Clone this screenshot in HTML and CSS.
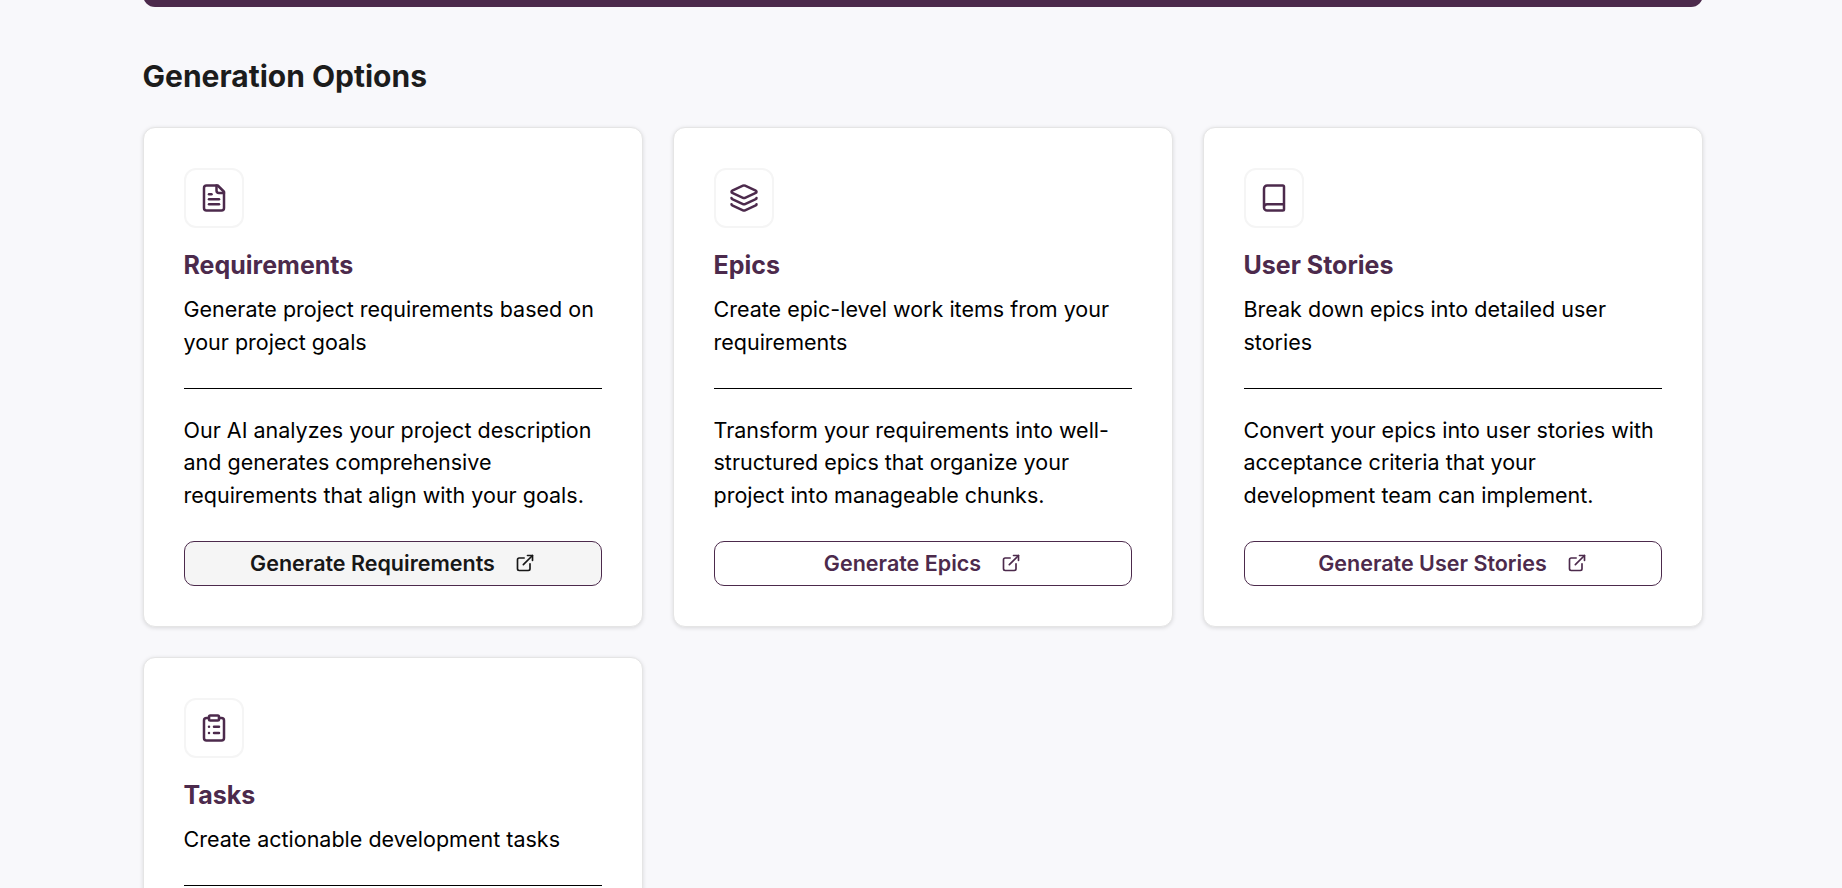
FILE: index.html
```html
<!DOCTYPE html>
<html lang="en">
<head>
<meta charset="utf-8">
<title>Generation Options</title>
<link rel="stylesheet" href="styles.css">
</head>
<body>
<svg class="sprite" aria-hidden="true">
  <symbol id="external" viewBox="0 0 24 24"><path d="M15 3h6v6"/><path d="M10 14 21 3"/><path d="M18 13v6a2 2 0 0 1-2 2H5a2 2 0 0 1-2-2V8a2 2 0 0 1 2-2h6"/></symbol>
</svg>
<main class="page">
  <div class="banner"></div>
  <h2 class="heading">Generation Options</h2>
  <div class="grid">
    <section class="card">
      <div class="icon-box"><svg class="icon" viewBox="0 0 24 24"><path d="M15 2H6a2 2 0 0 0-2 2v16a2 2 0 0 0 2 2h12a2 2 0 0 0 2-2V7Z"/><path d="M14 2v4a2 2 0 0 0 2 2h4"/><path d="M10 9H8"/><path d="M16 13H8"/><path d="M16 17H8"/></svg></div>
      <h3 class="title">Requirements</h3>
      <p class="text">Generate project requirements based on your project goals</p>
      <hr class="divider">
      <p class="text">Our AI analyzes your project description and generates comprehensive requirements that align with your goals.</p>
      <button class="button button-hover">Generate Requirements<svg class="icon-small"><use href="#external"/></svg></button>
    </section>
    <section class="card">
      <div class="icon-box"><svg class="icon" viewBox="0 0 24 24"><path d="M12.83 2.18a2 2 0 0 0-1.66 0L2.6 6.08a1 1 0 0 0 0 1.83l8.58 3.91a2 2 0 0 0 1.66 0l8.58-3.9a1 1 0 0 0 0-1.83z"/><path d="M2 12a1 1 0 0 0 .58.91l8.6 3.91a2 2 0 0 0 1.65 0l8.58-3.9A1 1 0 0 0 22 12"/><path d="M2 17a1 1 0 0 0 .58.91l8.6 3.91a2 2 0 0 0 1.65 0l8.58-3.9A1 1 0 0 0 22 17"/></svg></div>
      <h3 class="title">Epics</h3>
      <p class="text">Create epic-level work items from your requirements</p>
      <hr class="divider">
      <p class="text">Transform your requirements into well-structured epics that organize your project into manageable chunks.</p>
      <button class="button">Generate Epics<svg class="icon-small"><use href="#external"/></svg></button>
    </section>
    <section class="card">
      <div class="icon-box"><svg class="icon" viewBox="0 0 24 24"><path d="M4 19.5v-15A2.5 2.5 0 0 1 6.500 2H19a1 1 0 0 1 1 1v18a1 1 0 0 1-1 1H6.500a1 1 0 0 1 0-5H20"/></svg></div>
      <h3 class="title">User Stories</h3>
      <p class="text">Break down epics into detailed user stories</p>
      <hr class="divider">
      <p class="text">Convert your epics into user stories with acceptance criteria that your development team can implement.</p>
      <button class="button">Generate User Stories<svg class="icon-small"><use href="#external"/></svg></button>
    </section>
    <section class="card">
      <div class="icon-box"><svg class="icon" viewBox="0 0 24 24"><rect width="8" height="4" x="8" y="2" rx="1"/><path d="M16 4h2a2 2 0 0 1 2 2v14a2 2 0 0 1-2 2H6a2 2 0 0 1-2-2V6a2 2 0 0 1 2-2h2"/><path d="M12 11h4"/><path d="M12 16h4"/><path d="M8 11h.01"/><path d="M8 16h.01"/></svg></div>
      <h3 class="title">Tasks</h3>
      <p class="text">Create actionable development tasks</p>
      <hr class="divider">
    </section>
  </div>
</main>
</body>
</html>
```
FILE: styles.css
```css
* { box-sizing: border-box; }
body {
  margin: 0;
  height: 888px;
  overflow: hidden;
  background: #f8f8fb;
  color: #000;
  font-family: Inter, "Liberation Sans", sans-serif;
}
.sprite { display: none; }
.page {
  display: flow-root;
  height: 888px;
  padding: 0 139px 0 143px;
  overflow: hidden;
}
.banner { height: 30px; margin-top: -23px; background: #4c2a4c; border-radius: 12px; }
.heading {
  margin: 49px 0 31px -.5px;
  font-size: 30px;
  line-height: 40px;
  font-weight: 700;
  color: #1c1c1c;
}
.grid {
  display: grid;
  grid-template-columns: repeat(3, 500px);
  gap: 30px;
}
.card {
  height: 500px;
  padding: 40px;
  display: flex;
  flex-direction: column;
  background: #fff;
  border: 1px solid #e5e5e5;
  border-radius: 12px;
  box-shadow: 0 1px 4px rgba(0, 0, 0, .13);
}
.icon-box {
  width: 60px;
  height: 60px;
  flex: none;
  display: flex;
  align-items: center;
  justify-content: center;
  border: 2px solid #f5f5f5;
  border-radius: 12px;
}
.icon, .icon-small {
  fill: none;
  stroke: #4c2a4c;
  stroke-width: 2;
  stroke-linecap: round;
  stroke-linejoin: round;
}
.icon { width: 30px; height: 30px; }
.icon-small { width: 20px; height: 20px; stroke: currentColor; }
.title {
  margin: 20px 0 10px -.5px;
  font-size: 25px;
  line-height: 35px;
  font-weight: 700;
  color: #4c2a4c;
}
.text {
  margin: 0 0 0 -.5px;
  font-size: 21.5px;
  line-height: 32.5px;
}
.divider {
  width: 100%;
  height: 1px;
  flex: none;
  margin: 29.7px 0 25px;
  border: 0;
  background: #000;
}
.button {
  height: 45px;
  margin-top: auto;
  padding: 0 7px 2px 6px;
  display: flex;
  align-items: center;
  justify-content: center;
  gap: 20px;
  background: #fff;
  border: 1px solid #4c2a4c;
  border-radius: 10px;
  color: #4c2a4c;
  font: 600 21.5px/30px Inter, "Liberation Sans", sans-serif;
}
.button-hover { background: #f5f5f5; color: #171717; }
```
